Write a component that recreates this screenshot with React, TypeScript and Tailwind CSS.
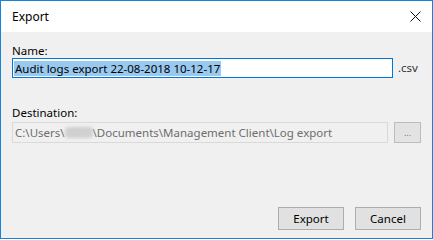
import React from "react";

const CloseIcon = () => (
  <svg width="11" height="11" viewBox="0 0 11 11" className="block">
    <path d="M0.5 0.5 L10.5 10.5 M10.5 0.5 L0.5 10.5" stroke="#111" strokeWidth="1" fill="none" />
  </svg>
);

const App = () => {
  return (
    <div
      className="w-[433px] h-[239px] border border-[#1883d7] bg-[#f0f0f0] flex flex-col text-[11.5px] text-black"
      style={{ fontFamily: '"Noto Sans", "Open Sans", sans-serif' }}
    >
      {/* title bar */}
      <div className="h-[31px] bg-white flex items-center justify-between pl-[11px] pr-[11px] shrink-0">
        <span className="text-[12px]">Export</span>
        <CloseIcon />
      </div>

      <div className="flex-1 flex flex-col px-[11px] pt-[11px] pb-[8px]">
        <label className="leading-[15px]">Name:</label>
        <div className="flex items-center">
          <div className="w-[381px] h-[20px] border border-[#0078d7] bg-white flex items-center px-[1px]">
            <span className="bg-[#99c9ef] leading-[15px] px-[1px]">Audit logs export 22-08-2018 10-12-17</span>
          </div>
          <span className="ml-[5px] text-[#333]">.csv</span>
        </div>

        <label className="leading-[15px] mt-[27px] mb-[2px]">Destination:</label>
        <div className="flex items-center">
          <div className="w-[377px] h-[21px] border border-[#d9d9d9] bg-[#f0f0f0] flex items-center px-[2px] text-[#6d6d6d] whitespace-nowrap overflow-hidden">
            <span>C:\Users\</span>
            <span className="inline-block w-[28px] h-[11px] bg-[#d0d0d0] blur-[1.5px] rounded-sm" />
            <span>\Documents\Management Client\Log export</span>
          </div>
          <button className="ml-[6px] w-[27px] h-[21px] border border-[#bdbdbd] bg-[#e3e3e3] flex items-end justify-center pb-[5px] text-[#7a7a7a] text-[9px] leading-none">
            ...
          </button>
        </div>

        <div className="mt-auto flex justify-end gap-[11px]">
          <button className="w-[66px] h-[23px] border border-[#adadad] bg-[#e1e1e1]">Export</button>
          <button className="w-[66px] h-[23px] border border-[#adadad] bg-[#e1e1e1]">Cancel</button>
        </div>
      </div>
    </div>
  );
};

export default App;
